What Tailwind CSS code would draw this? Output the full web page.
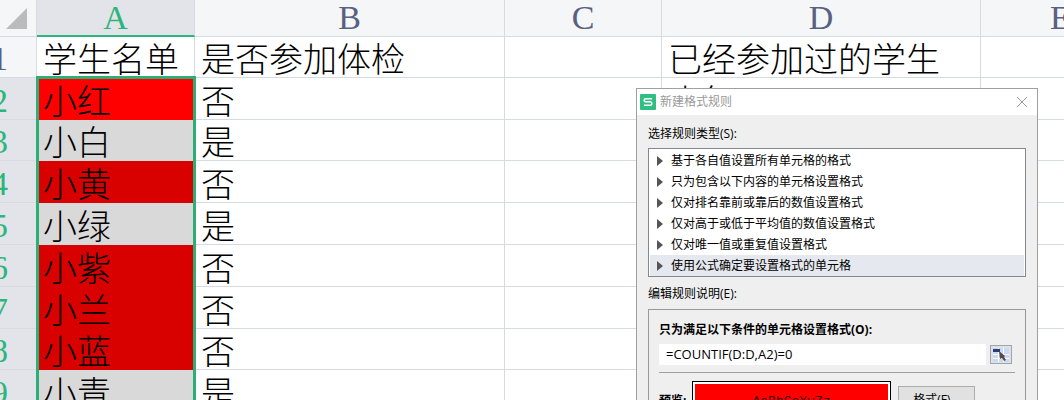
<!doctype html>
<html lang="zh-CN">
<head>
    <meta charset="UTF-8">
    <meta name="viewport" content="width=device-width, initial-scale=1.0">
    <title>新建格式规则</title>
    <script src="https://cdn.jsdelivr.net/npm/@tailwindcss/browser@4"></script>
</head>
<body class="bg-white">
<main class="relative h-screen overflow-hidden">
    <!-- sheet, scrolled so the row numbers are half hidden -->
    <table class="-ml-[37px] w-[1178px] table-fixed border-separate border-spacing-0 font-['Liberation_Serif','Noto_Sans_CJK_SC',serif] text-[34px] leading-8 font-light whitespace-nowrap text-black">
        <colgroup>
            <col class="w-[74px]">
            <col class="w-[158px]">
            <col class="w-[310px]">
            <col class="w-[157px]">
            <col class="w-[319px]">
            <col class="w-[160px]">
        </colgroup>
        <thead>
        <tr class="h-[37px] bg-[#f5f6f8] text-[#596080] *:border-r *:border-b *:border-[#d5dae3] *:p-0 *:font-normal">
            <td>
                <svg class="ml-auto mr-[9px]" width="21" height="21" viewBox="0 0 21 21"><path d="M21 0v21H0z" fill="#b9bbbd"/></svg>
            </td>
            <th class="border-b-2! border-b-[#2cb67d]! bg-[#e3e4ea] text-[#2cb67d]">A</th>
            <th>B</th>
            <th>C</th>
            <th>D</th>
            <th>E</th>
        </tr>
        </thead>
        <tbody class="[&_td]:border-r [&_td]:border-b [&_td]:border-[#d5dae3] [&_td]:pt-2 [&_td]:pr-0 [&_td]:pb-0 [&_td]:pl-[6px] [&_th]:border-r [&_th]:border-b [&_th]:border-[#d5dae3] [&_th]:bg-[#e3e4ea] [&_th]:px-0 [&_th]:pt-1 [&_th]:pb-0 [&_th]:font-normal [&_th]:text-[#2cb67d]">
        <tr class="h-[41px]">
            <th class="bg-[#f5f6f8]! text-[#596080]!">1</th>
            <td>学生名单</td>
            <td>是否参加体检</td>
            <td></td>
            <td>已经参加过的学生</td>
            <td></td>
        </tr>
        <tr class="h-[42px]">
            <th>2</th>
            <td class="relative border-[#ff0000]! bg-[#ff0000]">
                小红
                <span class="absolute -top-[2px] -left-px -right-[2px] h-[360px] border-3 border-[#2cae76]"></span>
            </td>
            <td>否</td>
            <td></td>
            <td>小红</td>
            <td></td>
        </tr>
        <tr class="h-[41px]">
            <th>3</th>
            <td class="border-[#d9d9d9]! bg-[#d9d9d9]">小白</td>
            <td>是</td>
            <td></td>
            <td></td>
            <td></td>
        </tr>
        <tr class="h-[42px]">
            <th>4</th>
            <td class="border-[#d90000]! bg-[#d90000]">小黄</td>
            <td>否</td>
            <td></td>
            <td></td>
            <td></td>
        </tr>
        <tr class="h-[42px]">
            <th>5</th>
            <td class="border-[#d9d9d9]! bg-[#d9d9d9]">小绿</td>
            <td>是</td>
            <td></td>
            <td></td>
            <td></td>
        </tr>
        <tr class="h-[42px]">
            <th>6</th>
            <td class="border-[#d90000]! bg-[#d90000]">小紫</td>
            <td>否</td>
            <td></td>
            <td></td>
            <td></td>
        </tr>
        <tr class="h-[42px]">
            <th>7</th>
            <td class="border-[#d90000]! bg-[#d90000]">小兰</td>
            <td>否</td>
            <td></td>
            <td></td>
            <td></td>
        </tr>
        <tr class="h-[41px]">
            <th>8</th>
            <td class="border-[#d90000]! bg-[#d90000]">小蓝</td>
            <td>否</td>
            <td></td>
            <td></td>
            <td></td>
        </tr>
        <tr class="h-[42px]">
            <th>9</th>
            <td class="border-[#d9d9d9]! bg-[#d9d9d9]">小青</td>
            <td>是</td>
            <td></td>
            <td></td>
            <td></td>
        </tr>
        </tbody>
    </table>

    <!-- rule dialog -->
    <section role="dialog" aria-labelledby="title" class="absolute top-[88px] left-[636px] w-[402px] border border-[#a0a0a0] bg-[#efefef] font-['Open_Sans','Noto_Sans_CJK_SC',sans-serif] text-xs text-black">
        <header class="flex h-[26px] items-center gap-1 bg-white pr-[7px] pl-[3px]">
            <svg width="16" height="16" viewBox="0 0 16 16">
                <rect width="16" height="16" rx="1" fill="#2fbf82"/>
                <path d="M12 4.7H5.6q-1.4 0-1.4 1.5t1.4 1.6h4.8q1.4 0 1.4 1.7t-1.4 1.7H4" fill="none" stroke="#fff" stroke-width="1.6"/>
            </svg>
            <h1 id="title" class="grow text-[#999]">新建格式规则</h1>
            <button type="button" aria-label="关闭" class="p-[2px]">
                <svg width="12" height="12" viewBox="0 0 12 12"><path d="M1 1l10 10M11 1L1 11" stroke="#999" fill="none"/></svg>
            </button>
        </header>
        <div class="px-[11px] pt-[11px]">
            <h2 id="type" class="leading-4">选择规则类型(S):</h2>
            <ul role="listbox" aria-labelledby="type" class="mt-[6px] border border-[#828790] bg-white px-px pt-px *:flex *:h-[21px] *:items-center *:gap-2 *:pl-[7px]">
                <li role="option"><svg width="6" height="10" viewBox="0 0 6 10"><path d="M0 0l6 5-6 5z" fill="#555"/></svg>基于各自值设置所有单元格的格式</li>
                <li role="option"><svg width="6" height="10" viewBox="0 0 6 10"><path d="M0 0l6 5-6 5z" fill="#555"/></svg>只为包含以下内容的单元格设置格式</li>
                <li role="option"><svg width="6" height="10" viewBox="0 0 6 10"><path d="M0 0l6 5-6 5z" fill="#555"/></svg>仅对排名靠前或靠后的数值设置格式</li>
                <li role="option"><svg width="6" height="10" viewBox="0 0 6 10"><path d="M0 0l6 5-6 5z" fill="#555"/></svg>仅对高于或低于平均值的数值设置格式</li>
                <li role="option"><svg width="6" height="10" viewBox="0 0 6 10"><path d="M0 0l6 5-6 5z" fill="#555"/></svg>仅对唯一值或重复值设置格式</li>
                <li role="option" aria-selected="true" class="bg-[#e5e8ee]"><svg width="6" height="10" viewBox="0 0 6 10"><path d="M0 0l6 5-6 5z" fill="#555"/></svg>使用公式确定要设置格式的单元格</li>
            </ul>
            <h2 class="mt-[9px] leading-4">编辑规则说明(E):</h2>
            <div class="mt-[7px] border border-[#999] px-[10px] pt-3 pb-4">
                <label for="formula" class="block leading-4 font-bold">只为满足以下条件的单元格设置格式(O):</label>
                <div class="mt-[6px] flex items-center gap-1">
                    <input id="formula" type="text" value="=COUNTIF(D:D,A2)=0" class="h-[21px] min-w-0 grow bg-white px-[7px] pb-[2px] text-[13px] outline-none">
                    <button type="button" aria-label="选择区域" class="mr-[3px] flex h-[19px] w-[22px] items-center justify-center border border-[#a0a4ac] bg-[#dfe1e5]">
                        <svg width="16" height="14" viewBox="0 0 16 14">
                            <path d="M0 0h16v14H0z" fill="#c8daf3"/>
                            <path d="M0 6.500h16M0 10.500h16M5.500 0v14M10.500 0v14" stroke="#fff"/>
                            <path d="M0 1h7v3H0z" fill="#2d3a78"/>
                            <path d="M6 3l6 5-1 1 2 3-2 1-2-3-2 1z" fill="#5a4a4a"/>
                        </svg>
                    </button>
                </div>
                <hr class="mt-[7px] border-[#a0a0a0]">
                <div class="mt-2 flex items-start gap-[5px]">
                    <span class="w-7 pt-3 leading-4 font-bold">预览:</span>
                    <div class="flex h-10 w-[199px] border border-black bg-white p-[2px]">
                        <span class="grow bg-[#ff0000] pt-[10px] text-center font-['Liberation_Mono',monospace] text-[13px] leading-4 text-[#400000]">AaBbCcYyZz</span>
                    </div>
                    <button type="button" class="mt-[5px] ml-[2px] h-7 w-[77px] border border-[#adadad] bg-[#e1e1e1]">格式(F)...</button>
                </div>
            </div>
        </div>
    </section>
</main>
</body>
</html>
